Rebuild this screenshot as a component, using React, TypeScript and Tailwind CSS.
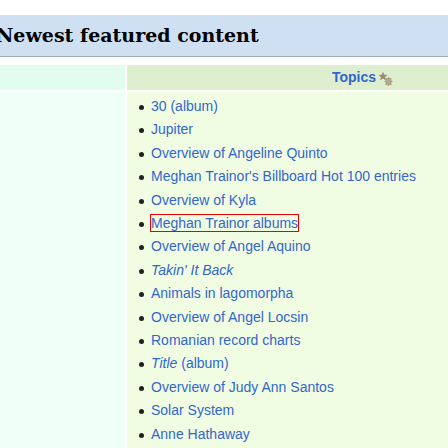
const items: { label: React.ReactNode; boxed?: boolean }[] = [
  { label: '30 (album)' },
  { label: 'Jupiter' },
  { label: 'Overview of Angeline Quinto' },
  { label: "Meghan Trainor's Billboard Hot 100 entries" },
  { label: 'Overview of Kyla' },
  { label: 'Meghan Trainor albums', boxed: true },
  { label: 'Overview of Angel Aquino' },
  { label: <i>Takin' It Back</i> },
  { label: 'Animals in lagomorpha' },
  { label: 'Overview of Angel Locsin' },
  { label: 'Romanian record charts' },
  { label: <><i>Title</i> (album)</> },
  { label: 'Overview of Judy Ann Santos' },
  { label: 'Solar System' },
  { label: 'Anne Hathaway' },
];

function TopicStars() {
  return (
    <svg width="14" height="14" viewBox="0 0 14 14" className="ml-[3px] mt-[2px]">
      <polygon
        points="4,0.5 5,3.2 7.8,3.3 5.6,5 6.4,7.7 4,6.1 1.6,7.7 2.4,5 0.2,3.3 3,3.2"
        fill="#9c8c74"
        stroke="#7d6d58"
        strokeWidth="0.5"
      />
      <polygon
        points="9.5,5 10.3,6.8 12.3,6.3 11.6,8.3 13.5,9.5 11.6,10.7 12.3,12.7 10.3,12.2 9.5,14 8.7,12.2 6.7,12.7 7.4,10.7 5.5,9.5 7.4,8.3 6.7,6.3 8.7,6.8"
        fill="#b7a890"
        stroke="#958670"
        strokeWidth="0.5"
      />
    </svg>
  );
}

export default function App() {
  return (
    <div className="w-[448px] h-[448px] overflow-hidden bg-white">
      <div className="mt-[15px] h-[42px] bg-[#cee0f2] border-b border-[#a3acb8] flex items-center">
        <h2 className="-ml-[4px] whitespace-nowrap text-[19px] font-bold text-black font-['DejaVu_Serif',Georgia,serif] leading-none">
          Newest featured content
        </h2>
      </div>

      <div className="mt-[8px] grid grid-cols-[125px_1fr] grid-rows-[25px_1fr] gap-[2px] font-['Liberation_Sans',Arial,sans-serif]">
        <div className="bg-[#e2fdf0]" />
        <div className="bg-[#deefcf] flex items-center justify-end pr-[55px]">
          <span className="text-[14px] font-bold text-[#3366cc]">Topics</span>
          <TopicStars />
        </div>
        <div className="bg-[#f0fff8] h-[400px]" />
        <ul className="bg-[#f1fde3] pt-[3px] pl-[24px] text-[#3366cc]">
          {items.map((item, i) => (
            <li key={i} className="relative text-[14px] leading-[23.4px] whitespace-nowrap">
              <span className="absolute -left-[12px] top-[10px] w-[5px] h-[5px] rounded-full bg-[#202122]" />
              <span className={item.boxed ? 'outline outline-1 outline-[#ee0000]' : ''}>{item.label}</span>
            </li>
          ))}
        </ul>
      </div>
    </div>
  );
}
